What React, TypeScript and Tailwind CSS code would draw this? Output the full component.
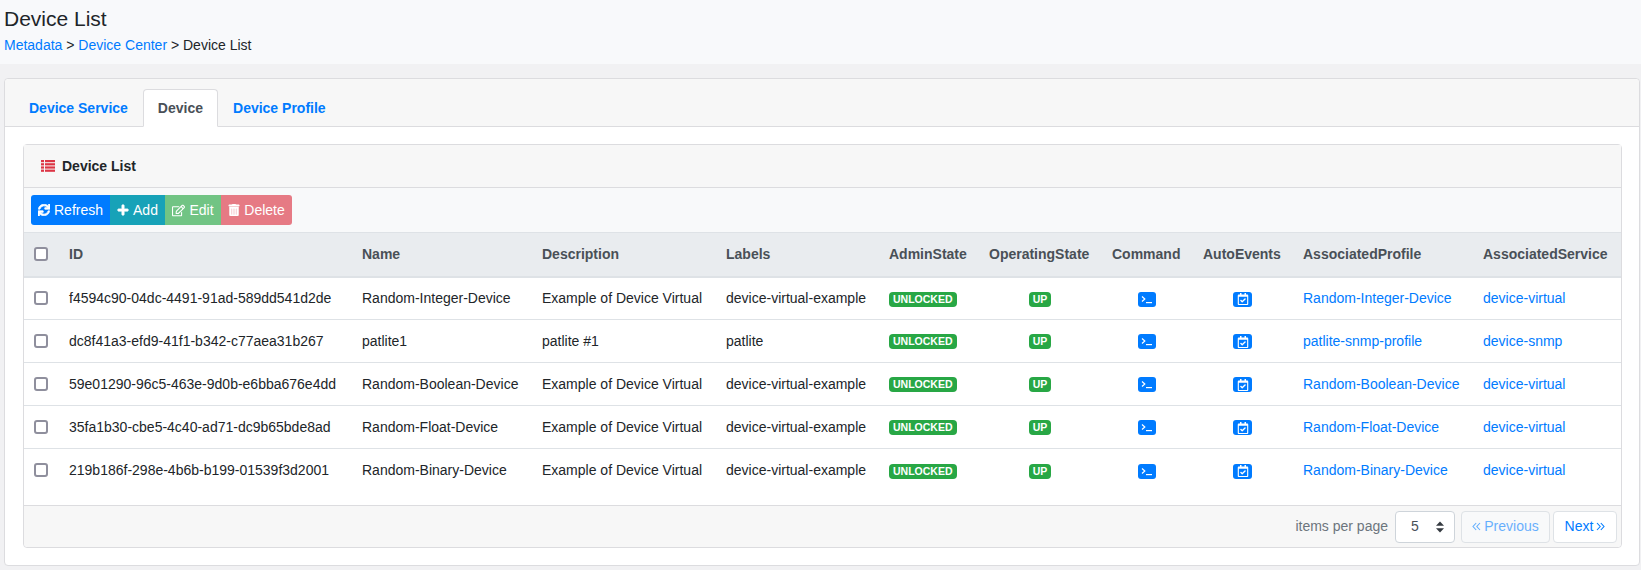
import React from "react";
import { FaSync, FaPlus, FaRegEdit, FaTrashAlt, FaRegCalendarCheck } from "react-icons/fa";

const rows = [
  ["f4594c90-04dc-4491-91ad-589dd541d2de", "Random-Integer-Device", "Example of Device Virtual", "device-virtual-example", "Random-Integer-Device", "device-virtual"],
  ["dc8f41a3-efd9-41f1-b342-c77aea31b267", "patlite1", "patlite #1", "patlite", "patlite-snmp-profile", "device-snmp"],
  ["59e01290-96c5-463e-9d0b-e6bba676e4dd", "Random-Boolean-Device", "Example of Device Virtual", "device-virtual-example", "Random-Boolean-Device", "device-virtual"],
  ["35fa1b30-cbe5-4c40-ad71-dc9b65bde8ad", "Random-Float-Device", "Example of Device Virtual", "device-virtual-example", "Random-Float-Device", "device-virtual"],
  ["219b186f-298e-4b6b-b199-01539f3d2001", "Random-Binary-Device", "Example of Device Virtual", "device-virtual-example", "Random-Binary-Device", "device-virtual"],
];

const headers = ["ID", "Name", "Description", "Labels", "AdminState", "OperatingState", "Command", "AutoEvents", "AssociatedProfile", "AssociatedService"];
const widths = ["w-[33px]", "w-[293px]", "w-[180px]", "w-[184px]", "w-[163px]", "w-[100px]", "w-[123px]", "w-[91px]", "w-[100px]", "w-[180px]", "w-[150px]"];

function Badge({ children }: { children: React.ReactNode }) {
  return (
    <span className="inline-block rounded-[4px] bg-[#28a745] px-[4px] py-[2px] text-[10.5px] font-bold leading-[11px] text-white align-middle">
      {children}
    </span>
  );
}

function TerminalIcon() {
  return (
    <svg width="12" height="9" viewBox="0 0 12 9" fill="none" stroke="white" strokeWidth="1.2">
      <path d="M1 1.5 L3.8 4 L1 6.5" />
      <path d="M5 7.6 H11" />
    </svg>
  );
}

function ListIcon() {
  return (
    <svg width="14" height="12" viewBox="0 0 14 12" fill="#dc3545">
      <rect x="0" y="0" width="3" height="2.2" />
      <rect x="4" y="0" width="10" height="2.2" />
      <rect x="0" y="3.2" width="3" height="2.2" />
      <rect x="4" y="3.2" width="10" height="2.2" />
      <rect x="0" y="6.4" width="3" height="2.2" />
      <rect x="4" y="6.4" width="10" height="2.2" />
      <rect x="0" y="9.6" width="3" height="2.2" />
      <rect x="4" y="9.6" width="10" height="2.2" />
    </svg>
  );
}

function DoubleAngle({ dir }: { dir: "left" | "right" }) {
  return (
    <svg width="9" height="9" viewBox="0 0 9 9" fill="none" stroke="currentColor" strokeWidth="1.1">
      {dir === "left" ? <path d="M4.2 1 L1 4.5 L4.2 8 M8 1 L4.8 4.5 L8 8" /> : <path d="M1 1 L4.2 4.5 L1 8 M4.8 1 L8 4.5 L4.8 8" />}
    </svg>
  );
}

function Check() {
  return <input type="checkbox" className="block h-[14px] w-[14px] appearance-none rounded-[3px] border-2 border-[#8f8f9d] bg-white" />;
}

export default function App() {
  return (
    <div className="min-h-[570px] bg-[#f1f1f3] font-['Liberation_Sans',Arial,sans-serif] text-[14px] leading-[21px] text-[#212529]">
      <header className="h-[64px] bg-[#f8f9fb] px-[4px] pt-[6px]">
        <h1 className="text-[21px] font-normal leading-[25px]">Device List</h1>
        <div className="mt-[4px] leading-[21px]">
          <a className="text-[#007bff]">Metadata</a> &gt; <a className="text-[#007bff]">Device Center</a> &gt; Device List
        </div>
      </header>

      <main className="pl-[4px] pr-[1px] pt-[14px]">
        <section className="h-[488px] rounded-[4px] border border-[#dcdcdf] bg-white">
          <div className="flex h-[48px] items-end rounded-t-[4px] border-b border-[#dcdcdf] bg-[#f7f7f7] pl-[9px]">
            <a className="mb-[-1px] flex h-[38px] items-center border border-transparent px-[14px] font-bold text-[#007bff]">Device Service</a>
            <a className="mb-[-1px] flex h-[38px] items-center rounded-t-[4px] border border-[#dcdcdf] border-b-white bg-white px-[14px] font-bold text-[#495057]">Device</a>
            <a className="mb-[-1px] flex h-[38px] items-center border border-transparent px-[14px] font-bold text-[#007bff]">Device Profile</a>
          </div>

          <div className="pl-[18px] pr-[17px] pt-[17px]">
            <div className="h-[404px] rounded-[4px] border border-[#dcdcdf] bg-white">
              <div className="flex h-[43px] items-center gap-[7px] border-b border-[#dcdcdf] bg-[#f7f7f7] pl-[17px] font-bold">
                <ListIcon />
                <span>Device List</span>
              </div>

              <div className="flex h-[44px] items-center bg-[#f8f9fa] pl-[7px]">
                <div className="flex h-[30px] text-[#ffffff]">
                  <button className="flex w-[79px] items-center justify-center gap-[4px] rounded-l-[3px] bg-[#007bff]">
                    <FaSync className="text-[12px]" stroke="currentColor" strokeWidth={30} /> Refresh
                  </button>
                  <button className="flex w-[55px] items-center justify-center gap-[4px] bg-[#17a2b8]">
                    <FaPlus className="text-[12px]" stroke="currentColor" strokeWidth={30} /> Add
                  </button>
                  <button className="flex w-[56px] items-center justify-center gap-[4px] bg-[#28a745]/65">
                    <FaRegEdit className="text-[13px]" /> Edit
                  </button>
                  <button className="flex w-[71px] items-center justify-center gap-[4px] rounded-r-[3px] bg-[#dc3545]/65">
                    <FaTrashAlt className="text-[12px]" stroke="currentColor" strokeWidth={20} /> Delete
                  </button>
                </div>
              </div>

              <div className="h-[273px] bg-white">
                <table className="w-full table-fixed border-collapse">
                  <colgroup>
                    {widths.map((w, i) => (
                      <col key={i} className={w} />
                    ))}
                  </colgroup>
                  <thead>
                    <tr className="h-[44px] border-t border-b-2 border-[#dee2e6] bg-[#e9ecef] text-[#495057]">
                      <th className="pl-[10px] text-left align-middle">
                        <Check />
                      </th>
                      {headers.map((h) => (
                        <th key={h} className="whitespace-nowrap pl-[12px] text-left font-bold">
                          {h}
                        </th>
                      ))}
                    </tr>
                  </thead>
                  <tbody>
                    {rows.map((r) => (
                      <tr key={r[0]} className="h-[43px] border-b border-[#dee2e6] last:border-b-0">
                        <td className="pl-[10px] align-middle">
                          <Check />
                        </td>
                        <td className="whitespace-nowrap pl-[12px]">{r[0]}</td>
                        <td className="whitespace-nowrap pl-[12px]">{r[1]}</td>
                        <td className="whitespace-nowrap pl-[12px]">{r[2]}</td>
                        <td className="whitespace-nowrap pl-[12px]">{r[3]}</td>
                        <td className="pl-[12px]">
                          <Badge>UNLOCKED</Badge>
                        </td>
                        <td className="pl-[3px] text-center">
                          <Badge>UP</Badge>
                        </td>
                        <td className="pl-[3px] text-center">
                          <span className="inline-flex h-[15px] w-[18px] items-center justify-center rounded-[3px] bg-[#007bff] align-middle">
                            <TerminalIcon />
                          </span>
                        </td>
                        <td className="pl-[3px] text-center">
                          <span className="inline-flex h-[15px] w-[19px] items-center justify-center rounded-[3px] bg-[#007bff] align-middle">
                            <FaRegCalendarCheck className="text-[12px] text-white" />
                          </span>
                        </td>
                        <td className="whitespace-nowrap pl-[12px] text-[#007bff]">{r[4]}</td>
                        <td className="whitespace-nowrap pl-[12px] text-[#007bff]">{r[5]}</td>
                      </tr>
                    ))}
                  </tbody>
                </table>
              </div>

              <div className="flex h-[42px] items-center justify-end rounded-b-[4px] border-t border-[#dcdcdf] bg-[#f7f7f7] pr-[4px]">
                <span className="mr-[7px] text-[#6c757d]">items per page</span>
                <div className="relative mr-[6px] h-[32px] w-[60px]">
                  <select className="h-full w-full appearance-none rounded-[4px] border border-[#ced4da] bg-white pl-[15px] text-[14px] text-[#495057]">
                    <option>5</option>
                  </select>
                  <svg className="pointer-events-none absolute right-[11px] top-[10px]" width="8" height="12" viewBox="0 0 8 12" fill="#343a40">
                    <path d="M4 0.5 L8 4.8 H0 Z" />
                    <path d="M4 11.5 L0 7.2 H8 Z" />
                  </svg>
                </div>
                <a className="mr-[3px] flex h-[32px] w-[89px] items-center justify-center gap-[3px] rounded-[4px] border border-[#dee2e6] bg-[#f8f9fa] text-[#007bff]/60">
                  <DoubleAngle dir="left" /> Previous
                </a>
                <a className="flex h-[32px] w-[64px] items-center justify-center gap-[3px] rounded-[4px] border border-[#dee2e6] bg-white text-[#007bff]">
                  Next <DoubleAngle dir="right" />
                </a>
              </div>
            </div>
          </div>
        </section>
      </main>
    </div>
  );
}
